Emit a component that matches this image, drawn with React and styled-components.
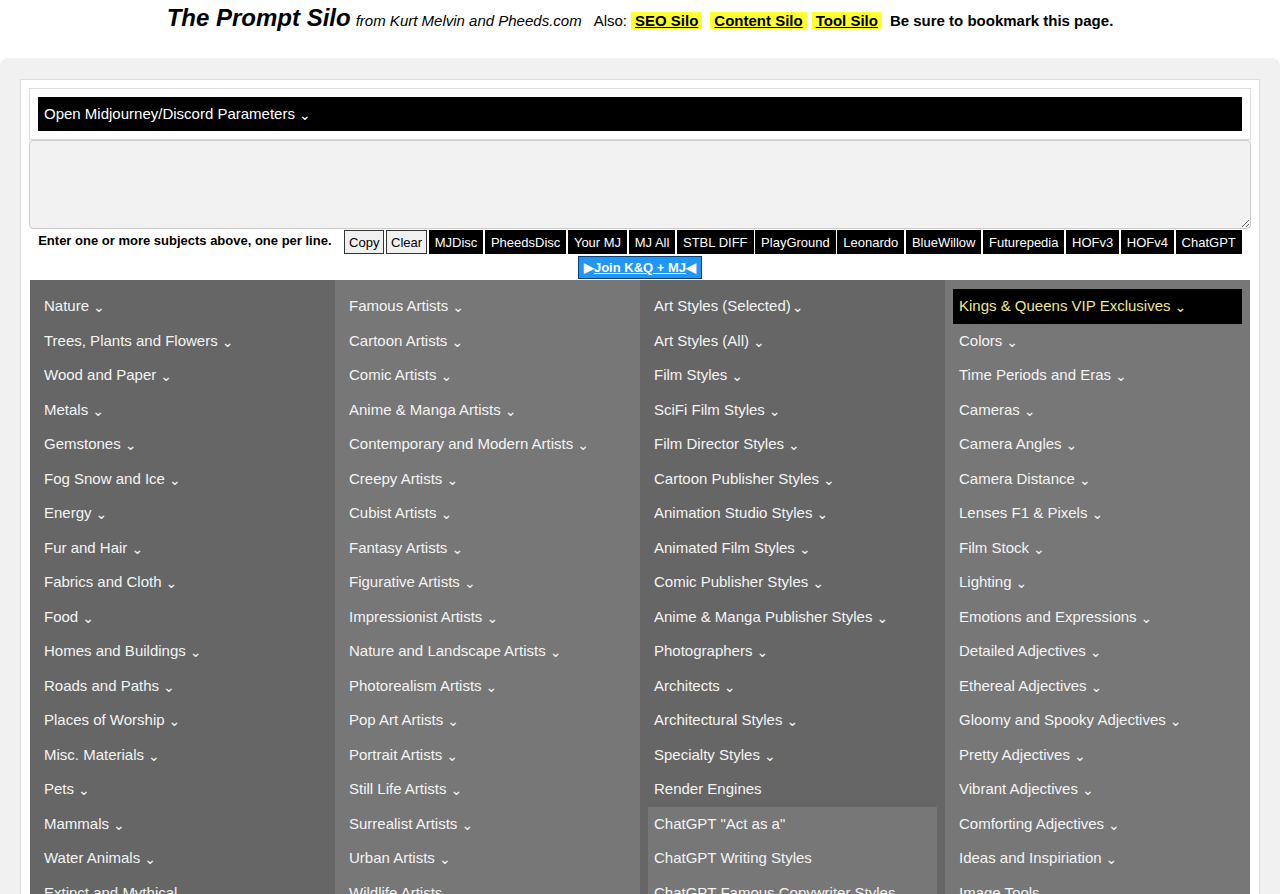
import React from "react";
import styled, { createGlobalStyle } from "styled-components";

const Global = createGlobalStyle`
  html, body { margin: 0; padding: 0; background: #fff; }
  body { font-family: "Liberation Sans", Arial, sans-serif; color: #000; }
  * { box-sizing: border-box; }
`;

const Header = styled.header`
  height: 58px;
  display: flex;
  justify-content: center;
  align-items: baseline;
  padding-top: 4px;
  font-size: 15px;
  white-space: nowrap;
`;

const Title = styled.span`
  font-size: 24px;
  font-weight: bold;
  font-style: italic;
  margin-right: 5px;
`;

const Byline = styled.span`
  font-style: italic;
  margin-right: 12px;
`;

const Also = styled.span`
  margin-right: 4px;
`;

const SiloLink = styled.a`
  background: #ffff33;
  color: #000;
  font-weight: bold;
  text-decoration: underline;
  padding: 0 4px;
  margin-right: ${(p) => p.$gap || 8}px;
`;

const Bookmark = styled.span`
  font-weight: bold;
`;

const Band = styled.div`
  background: #f1f1f1;
  border-radius: 8px 8px 0 0;
  padding: 21px 20px 0;
  min-height: 836px;
`;

const Panel = styled.div`
  background: #fff;
  border: 1px solid #dddddd;
  padding: 8px 8px 0;
`;

const ParamsBox = styled.div`
  border: 1px solid #dddddd;
  padding: 8px;
`;

const ParamsBar = styled.div`
  background: #000;
  color: #fff;
  height: 34px;
  padding: 0 6px;
  display: flex;
  align-items: center;
  font-size: 15px;
  line-height: 22px;
`;

/* small down chevron that follows expandable entries */
const Chevron = styled.span`
  display: inline-block;
  font-family: "DejaVu Sans", sans-serif;
  font-size: 14px;
  line-height: 0;
  margin-left: ${(p) => (p.$tight ? 1 : 4)}px;
  position: relative;
  top: 1px;
`;

const Subjects = styled.textarea`
  display: block;
  width: 100%;
  height: 89px;
  margin: 0;
  background: #f2f2f2;
  border: 1px solid #cccccc;
  border-radius: 4px;
  resize: vertical;
  font-family: inherit;
`;

const ToolRow = styled.div`
  display: flex;
  flex-wrap: wrap;
  justify-content: center;
  align-items: flex-start;
  gap: 1px 1.6px;
  margin-top: 1px;
`;

const Hint = styled.span`
  font-size: 13px;
  font-weight: bold;
  line-height: 22px;
  margin-right: 11px;
`;

const ToolButton = styled.button`
  height: 24px;
  font-family: inherit;
  font-size: 13px;
  border: 1px solid ${(p) => (p.$light ? "#333" : "#000")};
  background: ${(p) => (p.$light ? "#f0f0f0" : "#000")};
  color: ${(p) => (p.$light ? "#000" : "#fff")};
  padding: ${(p) => (p.$light ? "0 4px" : "0 5px")};
  cursor: pointer;
`;

const Break = styled.div`
  flex-basis: 100%;
  height: 0;
`;

const JoinButton = styled.a`
  display: inline-flex;
  align-items: center;
  height: 23px;
  padding: 0 5px;
  background: #2196f3;
  border: 1px solid #0d3c70;
  color: #fff;
  font-size: 13px;
  font-weight: bold;
  text-decoration: none;
  span {
    text-decoration: underline;
  }
`;

const Grid = styled.div`
  display: grid;
  grid-template-columns: repeat(4, 1fr);
  margin: 1px 1px 0;
`;

const Column = styled.div`
  background: ${(p) => (p.$light ? "#777777" : "#666666")};
  padding: 9px 0 8px;
`;

const Item = styled.div`
  margin: 0 8px;
  padding: 6px;
  height: 34.5px;
  font-size: 15px;
  line-height: 22.5px;
  color: ${(p) => (p.$vip ? "#eee690" : "#f4f4f4")};
  background: ${(p) => (p.$vip ? "#000" : "transparent")};
  white-space: nowrap;
  cursor: pointer;
`;

const SubGroup = styled.div`
  margin: 0 8px;
  background: #777777;
  & > ${Item} {
    margin: 0;
  }
`;

const tools = [
  "MJDisc",
  "PheedsDisc",
  "Your MJ",
  "MJ All",
  "STBL DIFF",
  "PlayGround",
  "Leonardo",
  "BlueWillow",
  "Futurepedia",
  "HOFv3",
  "HOFv4",
  "ChatGPT",
];

const col1 = [
  "Nature",
  "Trees, Plants and Flowers",
  "Wood and Paper",
  "Metals",
  "Gemstones",
  "Fog Snow and Ice",
  "Energy",
  "Fur and Hair",
  "Fabrics and Cloth",
  "Food",
  "Homes and Buildings",
  "Roads and Paths",
  "Places of Worship",
  "Misc. Materials",
  "Pets",
  "Mammals",
  "Water Animals",
  "Extinct and Mythical",
];

const col2 = [
  "Famous Artists",
  "Cartoon Artists",
  "Comic Artists",
  "Anime & Manga Artists",
  "Contemporary and Modern Artists",
  "Creepy Artists",
  "Cubist Artists",
  "Fantasy Artists",
  "Figurative Artists",
  "Impressionist Artists",
  "Nature and Landscape Artists",
  "Photorealism Artists",
  "Pop Art Artists",
  "Portrait Artists",
  "Still Life Artists",
  "Surrealist Artists",
  "Urban Artists",
  "Wildlife Artists",
];

const col3 = [
  ["Art Styles (Selected)", "tight"],
  ["Art Styles (All)"],
  ["Film Styles"],
  ["SciFi Film Styles"],
  ["Film Director Styles"],
  ["Cartoon Publisher Styles"],
  ["Animation Studio Styles"],
  ["Animated Film Styles"],
  ["Comic Publisher Styles"],
  ["Anime & Manga Publisher Styles"],
  ["Photographers"],
  ["Architects"],
  ["Architectural Styles"],
  ["Specialty Styles"],
  ["Render Engines", "none"],
];

const chatgpt = [
  'ChatGPT "Act as a"',
  "ChatGPT Writing Styles",
  "ChatGPT Famous Copywriter Styles",
];

const col4 = [
  "Colors",
  "Time Periods and Eras",
  "Cameras",
  "Camera Angles",
  "Camera Distance",
  "Lenses F1 & Pixels",
  "Film Stock",
  "Lighting",
  "Emotions and Expressions",
  "Detailed Adjectives",
  "Ethereal Adjectives",
  "Gloomy and Spooky Adjectives",
  "Pretty Adjectives",
  "Vibrant Adjectives",
  "Comforting Adjectives",
  "Ideas and Inspiriation",
  "Image Tools",
];

function Entry({ label, mode, vip }) {
  return (
    <Item $vip={vip}>
      {label}
      {mode !== "none" && <Chevron $tight={mode === "tight"}>⌄</Chevron>}
    </Item>
  );
}

export default function App() {
  return (
    <>
      <Global />
      <Header>
        <Title>The Prompt Silo</Title>
        <Byline>from Kurt Melvin and Pheeds.com</Byline>
        <Also>Also:</Also>
        <SiloLink href="#">SEO Silo</SiloLink>
        <SiloLink href="#" $gap={5}>
          Content Silo
        </SiloLink>
        <SiloLink href="#">Tool Silo</SiloLink>
        <Bookmark>Be sure to bookmark this page.</Bookmark>
      </Header>
      <Band>
        <Panel>
          <ParamsBox>
            <ParamsBar>
              Open Midjourney/Discord Parameters<Chevron>⌄</Chevron>
            </ParamsBar>
          </ParamsBox>
          <Subjects />
          <ToolRow>
            <Hint>Enter one or more subjects above, one per line.</Hint>
            <ToolButton $light>Copy</ToolButton>
            <ToolButton $light>Clear</ToolButton>
            {tools.map((t) => (
              <ToolButton key={t}>{t}</ToolButton>
            ))}
            <Break />
            <JoinButton href="#">
              ▶<span>Join K&amp;Q + MJ</span>◀
            </JoinButton>
          </ToolRow>
          <Grid>
            <Column>
              {col1.map((l) => (
                <Entry key={l} label={l} />
              ))}
            </Column>
            <Column $light>
              {col2.map((l) => (
                <Entry key={l} label={l} />
              ))}
            </Column>
            <Column>
              {col3.map(([l, m]) => (
                <Entry key={l} label={l} mode={m} />
              ))}
              <SubGroup>
                {chatgpt.map((l) => (
                  <Entry key={l} label={l} mode="none" />
                ))}
              </SubGroup>
            </Column>
            <Column $light>
              <Entry label="Kings & Queens VIP Exclusives" vip />
              {col4.map((l) => (
                <Entry key={l} label={l} />
              ))}
            </Column>
          </Grid>
        </Panel>
      </Band>
    </>
  );
}
